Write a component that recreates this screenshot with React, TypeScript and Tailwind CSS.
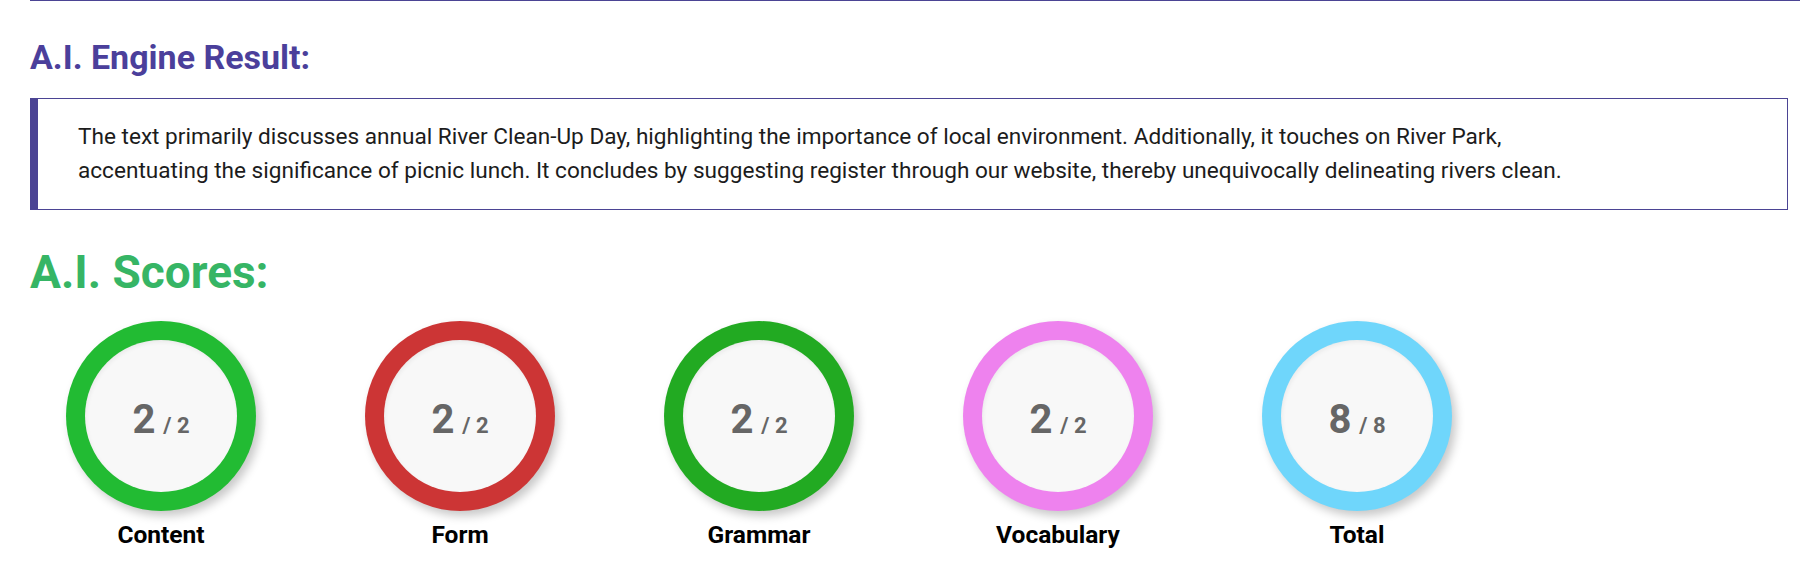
import React from 'react'

type Score = {
  label: string
  value: number
  max: number
  ring: string
}

const scores: Score[] = [
  { label: 'Content', value: 2, max: 2, ring: 'bg-[#22bb33]' },
  { label: 'Form', value: 2, max: 2, ring: 'bg-[#cc3535]' },
  { label: 'Grammar', value: 2, max: 2, ring: 'bg-[#22aa22]' },
  { label: 'Vocabulary', value: 2, max: 2, ring: 'bg-[#ee82ee]' },
  { label: 'Total', value: 8, max: 8, ring: 'bg-[#6fd6fb]' },
]

function ScoreCircle({ score }: { score: Score }) {
  return (
    <div className="flex w-[190px] flex-col items-center">
      {/* outer ring */}
      <div
        className={`flex h-[190px] w-[190px] items-center justify-center rounded-full ${score.ring} shadow-[4px_5px_10px_rgba(0,0,0,0.22)]`}
      >
        <div className="flex h-[152px] w-[152px] items-center justify-center rounded-full bg-[#f8f8f8] shadow-[inset_1px_2px_4px_rgba(0,0,0,0.06)]">
          <div className="flex items-baseline pt-[8px] font-bold text-[#666666]">
            <span className="text-[40px] leading-none">{score.value}</span>
            <span className="ml-[8px] text-[22px] leading-none">/ {score.max}</span>
          </div>
        </div>
      </div>
      <div className="mt-[9px] text-[24.5px] font-bold leading-[1.2] text-black">{score.label}</div>
    </div>
  )
}

export default function App() {
  return (
    <div className="min-h-[588px] bg-white font-['Roboto','Liberation_Sans',sans-serif]">
      <div className="ml-[30px] border-t-[1.5px] border-[#4b4494]">
        <div className="mr-[12px]">
          {/* Engine result */}
          <h2 className="pt-[36px] text-[34px] font-bold leading-[1.2] text-[#4b3f9b]">A.I. Engine Result:</h2>

          <div className="mt-[20px] border border-l-[8px] border-[#4b4494] py-[21px] pl-[40px] pr-[40px]">
            <p className="text-[22.6px] leading-[34px] text-[#1c1c1c]">
              The text primarily discusses annual River Clean-Up Day, highlighting the importance of local environment.
              Additionally, it touches on River Park,
              <br />
              accentuating the significance of picnic lunch. It concludes by suggesting register through our website,
              thereby unequivocally delineating rivers clean.
            </p>
          </div>

          {/* Scores */}
          <h2 className="mt-[35px] text-[46px] font-bold leading-[1.2] text-[#36b565]">A.I. Scores:</h2>

          <div className="mt-[21px] flex gap-[109px] pl-[36px]">
            {scores.map(s => (
              <ScoreCircle key={s.label} score={s} />
            ))}
          </div>
        </div>
      </div>
    </div>
  )
}
